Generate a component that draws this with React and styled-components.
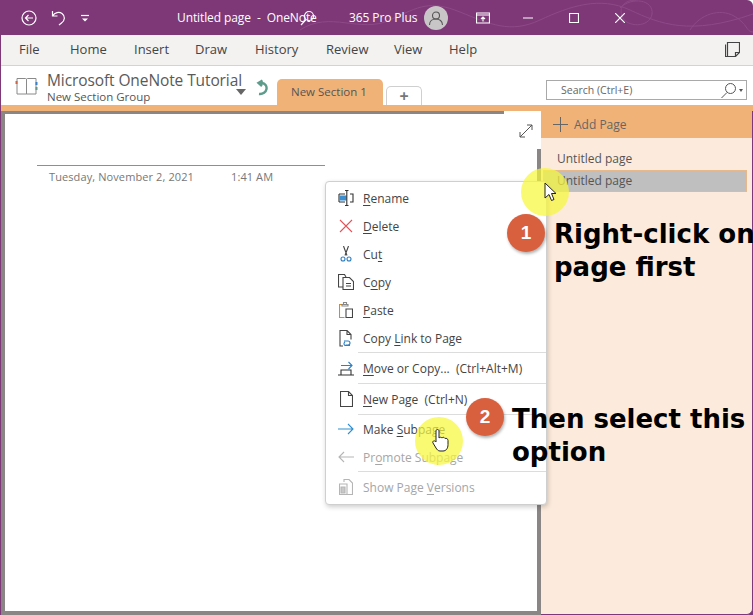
import React from "react";
import styled, { createGlobalStyle } from "styled-components";

const Global = createGlobalStyle`
  html, body { margin: 0; padding: 0; background: #fff; }
  body { font-family: "Open Sans", "Noto Sans", "Liberation Sans", sans-serif; }
`;

const Window = styled.div`
  position: relative;
  width: 753px;
  height: 615px;
  overflow: hidden;
  display: flex;
  flex-direction: column;
  background: #7e3878;
  border-top-right-radius: 6px;
`;

/* title bar */
const TitleBar = styled.div`
  position: relative;
  height: 35px;
  flex: none;
  display: flex;
  align-items: center;
  color: #fff;
  font-size: 12px;
`;

const Swirl = styled.svg`
  position: absolute;
  left: 300px;
  top: 0;
  width: 453px;
  height: 35px;
  fill: none;
  stroke: #8d4a87;
  stroke-width: 1;
`;

const TitleIcon = styled.svg`
  position: relative;
  flex: none;
  margin-left: ${p => p.$ml}px;
  fill: none;
  stroke: #fff;
  stroke-width: 1.2;
`;

const TitleText = styled.div`
  position: relative;
  flex: none;
  margin-left: ${p => p.$ml}px;
  width: ${p => p.$w}px;
  white-space: pre;
  letter-spacing: -0.1px;
`;

const Avatar = styled.div`
  position: relative;
  flex: none;
  width: 24px;
  height: 24px;
  margin-left: 11px;
  border-radius: 50%;
  background: #c9c6c8;
  display: flex;
  align-items: center;
  justify-content: center;
`;

/* ribbon tabs */
const Ribbon = styled.div`
  height: 31px;
  flex: none;
  box-sizing: border-box;
  padding: 0 0 2px 18px;
  display: flex;
  align-items: center;
  background: #f3f2f1;
  border-bottom: 1px solid #d4d3d2;
  font-size: 13px;
  color: #444;
  margin-left: 1px;
`;

const RibbonTab = styled.div`
  flex: none;
  width: ${p => p.$w}px;
`;

const StickyIcon = styled.svg`
  margin-left: auto;
  margin-right: 13px;
  fill: none;
  stroke: #444;
  stroke-width: 1.2;
`;

/* notebook + sections row */
const SectionBar = styled.div`
  height: 39px;
  flex: none;
  display: flex;
  align-items: flex-end;
  background: #fff;
  margin-left: 1px;
  position: relative;
`;

const Notebook = styled.svg`
  align-self: center;
  margin-left: 14px;
  flex: none;
  fill: none;
`;

const NotebookText = styled.div`
  align-self: center;
  margin-left: 9px;
  width: 189px;
  flex: none;
  color: #5a5a5a;
  white-space: nowrap;
`;

const NotebookName = styled.div`
  font-size: 15.5px;
  line-height: 19px;
  margin-top: 3px;
  letter-spacing: -0.1px;
`;

const GroupName = styled.div`
  font-size: 11.5px;
  line-height: 14px;
  color: #555;
`;

const Caret = styled.div`
  align-self: center;
  margin-top: 12px;
  flex: none;
  width: 0;
  height: 0;
  border-left: 5px solid transparent;
  border-right: 5px solid transparent;
  border-top: 6px solid #666;
`;

const SyncIcon = styled.svg`
  align-self: center;
  flex: none;
  margin-left: 10px;
  margin-top: 4px;
  fill: none;
  stroke: #5d9c8b;
  stroke-width: 2.4;
`;

const SectionTab = styled.div`
  flex: none;
  margin-left: 9px;
  width: 106px;
  height: 26px;
  box-sizing: border-box;
  padding: 5px 0 0 14px;
  background: #f0b277;
  border-radius: 5px 5px 0 0;
  font-size: 11.5px;
  color: #555;
`;

const NewTab = styled.div`
  flex: none;
  margin-left: 3px;
  width: 36px;
  height: 19px;
  box-sizing: border-box;
  border: 1px solid #cfcfcf;
  border-bottom: none;
  border-radius: 5px 5px 0 0;
  font-size: 16px;
  font-weight: 700;
  line-height: 18px;
  text-align: center;
  color: #777;
`;

const SearchBox = styled.div`
  position: absolute;
  right: 6px;
  top: 14px;
  width: 201px;
  height: 20px;
  box-sizing: border-box;
  border: 1px solid #a9a9a9;
  display: flex;
  align-items: center;
  padding-left: 14px;
  font-size: 10.5px;
  color: #666;
`;

const SearchTools = styled.div`
  margin-left: auto;
  margin-right: 3px;
  display: flex;
  align-items: center;
  gap: 2px;
`;

const TinyCaret = styled.div`
  width: 0;
  height: 0;
  border-left: 2.5px solid transparent;
  border-right: 2.5px solid transparent;
  border-top: 3px solid #555;
`;

const OrangeStrip = styled.div`
  height: 6px;
  flex: none;
  background: #f0b277;
  margin-left: 1px;
`;

/* main area */
const Body = styled.div`
  flex: 1;
  display: flex;
  min-height: 0;
  margin-left: 1px;
`;

const PageArea = styled.div`
  position: relative;
  width: 540px;
  flex: none;
  box-sizing: border-box;
  padding: 0 4px 4px 4px;
  background: #8a8686;
  display: flex;
  flex-direction: column;
`;

const Paper = styled.div`
  flex: 1;
  margin-top: 3px;
  background: #fff;
  position: relative;
  padding: 51px 0 0 32px;
`;

const TopNotch = styled.div`
  position: absolute;
  right: 0;
  top: 0;
  width: 37px;
  height: 38px;
  background: #fff;
`;

const ExpandIcon = styled.svg`
  position: absolute;
  right: 4px;
  top: 10px;
  fill: none;
  stroke: #555;
  stroke-width: 1;
`;

const TitleRule = styled.div`
  width: 288px;
  height: 1px;
  background: #8f8f8f;
`;

const DateLine = styled.div`
  display: flex;
  margin: 3px 0 0 12px;
  font-size: 11px;
  line-height: 15px;
  color: #777;
  letter-spacing: 0.1px;
`;

const DateText = styled.div`
  width: 182px;
`;

const PagePanel = styled.div`
  flex: 1;
  background: #fcebdc;
  border-right: 1px solid #7e3878;
  border-bottom: 1px solid #7e3878;
  border-bottom-right-radius: 6px;
  font-size: 12px;
  color: #555;
`;

const AddPage = styled.div`
  height: 27px;
  box-sizing: border-box;
  padding-left: 12px;
  display: flex;
  align-items: center;
  gap: 6px;
  background: #f0b277;
  color: #666;
`;

const PageList = styled.div`
  padding: 10px 5px 0 2px;
`;

const PageRow = styled.div`
  height: 22px;
  box-sizing: border-box;
  padding-left: 13px;
  line-height: 20px;
  border: 1px solid ${p => (p.$selected ? "#e6b98c" : "transparent")};
  background: ${p => (p.$selected ? "#bfbfbf" : "transparent")};
`;

/* context menu */
const Menu = styled.div`
  position: absolute;
  left: 325px;
  top: 181px;
  width: 222px;
  height: 324px;
  box-sizing: border-box;
  padding-top: 2px;
  background: #fff;
  border: 1px solid #cfcfcf;
  border-radius: 4px;
  box-shadow: 1px 2px 5px rgba(0, 0, 0, 0.2);
  font-size: 12px;
`;

const MenuRow = styled.div`
  height: ${p => p.$h || 28}px;
  display: flex;
  align-items: center;
  color: ${p => (p.$off ? "#a6a6a6" : "#444")};
  white-space: pre;
`;

const MenuIcon = styled.div`
  width: 37px;
  flex: none;
  display: flex;
  justify-content: center;
  padding-left: 3px;
  box-sizing: border-box;
`;

const MenuSep = styled.div`
  height: 1px;
  margin-left: 32px;
  background: #dcdcdc;
`;

const Key = styled.span`
  text-decoration: underline;
  text-underline-offset: 2px;
`;

/* tutorial overlay */
const Glow = styled.div`
  position: absolute;
  left: ${p => p.$x - 24}px;
  top: ${p => p.$y - 24}px;
  width: 48px;
  height: 48px;
  border-radius: 50%;
  background: rgba(247, 247, 60, 0.72);
`;

const StepBadge = styled.div`
  position: absolute;
  left: ${p => p.$x - 19}px;
  top: ${p => p.$y - 19}px;
  width: 38px;
  height: 38px;
  border-radius: 50%;
  background: #d8603f;
  color: #fff;
  font-family: "Liberation Sans", sans-serif;
  font-size: 19px;
  font-weight: 700;
  display: flex;
  align-items: center;
  justify-content: center;
  box-shadow: 1px 2px 3px rgba(0, 0, 0, 0.3);
`;

const Callout = styled.div`
  position: absolute;
  left: ${p => p.$x}px;
  top: ${p => p.$y}px;
  font-family: "DejaVu Sans", sans-serif;
  font-size: 26px;
  font-weight: 700;
  line-height: 33px;
  color: #000;
  white-space: nowrap;
`;

const Pointer = styled.svg`
  position: absolute;
  left: ${p => p.$x}px;
  top: ${p => p.$y}px;
`;

const stroke = { fill: "none", strokeWidth: 1.1 };

function App() {
  return (
    <Window>
      <Global />
      <TitleBar>
        <Swirl viewBox="0 0 453 35">
          <path d="M0 30C30 10 60 34 90 20S130 0 160 12 210 34 240 20 300 -4 330 10 390 36 453 14" />
          <path d="M320 8c12-12 34-8 32 6s-26 14-30 2 6-16 14-16M390 30c10-16 30-22 44-14s12 16 19 16" />
        </Swirl>
        <TitleIcon $ml={21} width="16" height="16" viewBox="0 0 16 16">
          <circle cx="8" cy="8" r="7" />
          <path d="M12 8H4.5M7.5 5 4.5 8l3 3" />
        </TitleIcon>
        <TitleIcon $ml={14} width="16" height="18" viewBox="0 0 16 18">
          <path d="M1.5 2v5h5M1.5 7C4 3.5 8 2.5 11 4.5c3.500 2.500 3 7-.5 9.500L8 16" />
        </TitleIcon>
        <TitleIcon $ml={13} width="10" height="10" viewBox="0 0 10 10">
          <path d="M1 2.500h8" />
          <path d="M2 5.500h6L5 8.500z" fill="#fff" stroke="none" />
        </TitleIcon>
        <TitleText $ml={87} $w={215}>Untitled page  -  OneNote</TitleText>
        <TitleIcon $ml={-93} width="16" height="16" viewBox="0 0 16 16">
          <circle cx="10" cy="6" r="4.500" />
          <path d="M7 9.500 2 15" />
        </TitleIcon>
        <TitleText $ml={34} $w={64}>365 Pro Plus</TitleText>
        <Avatar>
          <svg width="16" height="16" viewBox="0 0 16 16" fill="none" stroke="#555" strokeWidth="1.1">
            <circle cx="8" cy="5.500" r="3.500" />
            <path d="M1.500 15c0-4 3-6 6.500-6s6.500 2 6.500 6" />
          </svg>
        </Avatar>
        <TitleIcon $ml={28} width="14" height="12" viewBox="0 0 14 12">
          <path d="M.5 1h13v10H.5zM.5 3h13M7 9.500V5M5 7l2-2 2 2" />
        </TitleIcon>
        <TitleIcon $ml={33} width="10" height="10" viewBox="0 0 10 10">
          <path d="M0 5h10" />
        </TitleIcon>
        <TitleIcon $ml={36} width="10" height="10" viewBox="0 0 10 10">
          <path d="M.5.500h9v9h-9z" />
        </TitleIcon>
        <TitleIcon $ml={36} width="10" height="10" viewBox="0 0 10 10">
          <path d="m0 0 10 10M10 0 0 10" />
        </TitleIcon>
      </TitleBar>

      <Ribbon>
        <RibbonTab $w={51}>File</RibbonTab>
        <RibbonTab $w={64}>Home</RibbonTab>
        <RibbonTab $w={61}>Insert</RibbonTab>
        <RibbonTab $w={60}>Draw</RibbonTab>
        <RibbonTab $w={71}>History</RibbonTab>
        <RibbonTab $w={68}>Review</RibbonTab>
        <RibbonTab $w={55}>View</RibbonTab>
        <RibbonTab $w={30}>Help</RibbonTab>
        <StickyIcon width="15" height="15" viewBox="0 0 15 15">
          <path d="M2.500.500h12v10l-4 4h-8zM.5 2.500v12h10M14.500 10.500h-4v4" />
        </StickyIcon>
      </Ribbon>

      <SectionBar>
        <Notebook width="23" height="20" viewBox="0 0 23 20">
          <path d="M2 2.500h8.500c.5 0 1 .5 1 1V18H2zM21 2.500h-8.500c-.5 0-1 .5-1 1V18H21z" stroke="#8a8a8a" />
          <path d="M.5 5h2v3h-2z" fill="#d8603f" />
          <path d="M20.500 6h2v3h-2z" fill="#3b7fc4" />
          <path d="M20.500 11h2v3h-2z" fill="#5d9c8b" />
        </Notebook>
        <NotebookText>
          <NotebookName>Microsoft OneNote Tutorial</NotebookName>
          <GroupName>New Section Group</GroupName>
        </NotebookText>
        <Caret />
        <SyncIcon width="12" height="17" viewBox="0 0 12 17">
          <path d="M6.500 1.500 2.500 4l3.500 3M3 4h3c3 .5 5 3 4.500 6S7 15.500 3 15" />
        </SyncIcon>
        <SectionTab>New Section 1</SectionTab>
        <NewTab>+</NewTab>
        <SearchBox>
          Search (Ctrl+E)
          <SearchTools>
            <svg width="17" height="17" viewBox="0 0 17 17" fill="none" stroke="#555" strokeWidth="1">
              <circle cx="10.500" cy="6.500" r="5" />
              <path d="M7 10.500 1.500 16" />
            </svg>
            <TinyCaret />
          </SearchTools>
        </SearchBox>
      </SectionBar>

      <OrangeStrip />

      <Body>
        <PageArea>
          <TopNotch />
          <Paper>
            <ExpandIcon width="14" height="14" viewBox="0 0 14 14">
              <path d="M1 13 13 1M8 1h5v5M1 8v5h5" />
            </ExpandIcon>
            <TitleRule />
            <DateLine>
              <DateText>Tuesday, November 2, 2021</DateText>
              <div>1:41 AM</div>
            </DateLine>
          </Paper>
        </PageArea>
        <PagePanel>
          <AddPage>
            <svg width="15" height="15" viewBox="0 0 15 15" stroke="#666" strokeWidth="1">
              <path d="M7.500 0v15M0 7.500h15" />
            </svg>
            Add Page
          </AddPage>
          <PageList>
            <PageRow>Untitled page</PageRow>
            <PageRow $selected>Untitled page</PageRow>
          </PageList>
        </PagePanel>
      </Body>

      <Menu>
        <MenuRow>
          <MenuIcon>
            <svg width="16" height="16" viewBox="0 0 16 16" {...stroke} stroke="#333">
              <path d="M1 4h6M1 12h6M1 4v8M12 4h3v8h-3" />
              <path d="M2 6h6v4H2z" fill="#3b8ed0" stroke="#3b8ed0" />
              <path d="M7 .5h3.500M7 15.500h3.500M8.800.5v15" />
            </svg>
          </MenuIcon>
          <span><Key>R</Key>ename</span>
        </MenuRow>
        <MenuRow>
          <MenuIcon>
            <svg width="14" height="14" viewBox="0 0 14 14" fill="none" stroke="#e0545a" strokeWidth="1.1">
              <path d="m1 1 12 12M13 1 1 13" />
            </svg>
          </MenuIcon>
          <span><Key>D</Key>elete</span>
        </MenuRow>
        <MenuRow>
          <MenuIcon>
            <svg width="12" height="16" viewBox="0 0 12 16" {...stroke} stroke="#444">
              <path d="m3.500 0 3.500 9.500M8.500 0 5 9.500" />
              <circle cx="3" cy="13" r="2" stroke="#2f7fc1" />
              <circle cx="9" cy="13" r="2" stroke="#2f7fc1" />
            </svg>
          </MenuIcon>
          <span>Cu<Key>t</Key></span>
        </MenuRow>
        <MenuRow>
          <MenuIcon>
            <svg width="16" height="16" viewBox="0 0 16 16" {...stroke} stroke="#444">
              <path d="M5 13H.5V.5h6L8 3" />
              <path d="M5 3.500h6.500l4 4v8H5zM8 9.500h5M8 12h5" />
            </svg>
          </MenuIcon>
          <span>C<Key>o</Key>py</span>
        </MenuRow>
        <MenuRow>
          <MenuIcon>
            <svg width="14" height="16" viewBox="0 0 14 16" {...stroke} stroke="#d98a1f">
              <path d="M7 2.500H.5v13h5" />
              <path d="M3 2.500h6V4H3zM4.500 2.500V.5h3v2" stroke="#888" />
              <path d="M7 7h6.500v8.500H7z" stroke="#444" />
            </svg>
          </MenuIcon>
          <span><Key>P</Key>aste</span>
        </MenuRow>
        <MenuRow>
          <MenuIcon>
            <svg width="16" height="17" viewBox="0 0 16 17" {...stroke} stroke="#444">
              <path d="M2 12V.5h7l4 4v5M9 .5v4h4M2 12v4h3" />
              <path d="M6 11h4a2 2 0 0 1 0 4H7.500M12 15.500H7a2 2 0 0 1 0-3.500" stroke="#2f7fc1" />
            </svg>
          </MenuIcon>
          <span>Copy <Key>L</Key>ink to Page</span>
        </MenuRow>
        <MenuSep />
        <MenuRow $h={30}>
          <MenuIcon>
            <svg width="16" height="15" viewBox="0 0 16 15" {...stroke} stroke="#333">
              <path d="M3 4.500h11M10.500 1 14 4.500 10.500 8" stroke="#2f7fc1" />
              <path d="M3 14V9h10v5M0 14h16" />
            </svg>
          </MenuIcon>
          <span><Key>M</Key>ove or Copy...  (Ctrl+Alt+M)</span>
        </MenuRow>
        <MenuSep />
        <MenuRow $h={30}>
          <MenuIcon>
            <svg width="13" height="16" viewBox="0 0 13 16" {...stroke} stroke="#444">
              <path d="M.5.500h8l4 4v11H.5zM8.500.5v4h4" />
            </svg>
          </MenuIcon>
          <span><Key>N</Key>ew Page  (Ctrl+N)</span>
        </MenuRow>
        <MenuSep />
        <MenuRow>
          <MenuIcon>
            <svg width="16" height="12" viewBox="0 0 16 12" {...stroke} stroke="#2f8fd0">
              <path d="M0 6h15M10 1l5 5-5 5" />
            </svg>
          </MenuIcon>
          <span>Make <Key>S</Key>ubpage</span>
        </MenuRow>
        <MenuRow $off>
          <MenuIcon>
            <svg width="16" height="12" viewBox="0 0 16 12" {...stroke} stroke="#b5b5b5">
              <path d="M16 6H1M6 1 1 6l5 5" />
            </svg>
          </MenuIcon>
          <span>Pr<Key>o</Key>mote Subpage</span>
        </MenuRow>
        <MenuSep />
        <MenuRow $off $h={30}>
          <MenuIcon>
            <svg width="14" height="16" viewBox="0 0 14 16" {...stroke} stroke="#b5b5b5">
              <path d="M5 3V.5h5l3.500 3.500v11.500H.5V5H8v10.500" />
              <path d="M2 8h4v6H2z" fill="#c8c8c8" />
            </svg>
          </MenuIcon>
          <span>Show Page <Key>V</Key>ersions</span>
        </MenuRow>
      </Menu>

      <Glow $x={545} $y={192} />
      <Glow $x={439} $y={441} />
      <Pointer $x={544} $y={182} width="13" height="21" viewBox="0 0 13 21">
        <path d="M1 1v15l4-3.500 2.500 6 2.500-1-2.500-6H12z" fill="#fff" stroke="#222" strokeWidth="1" />
      </Pointer>
      <Pointer $x={432} $y={429} width="17" height="23" viewBox="0 0 17 23">
        <path d="M4 2c0-2 3-2 3 0v7c1-1 2-1 3 0 1-1 2-1 3 .5 1-.5 3 0 3 2v4c0 4-2 6.500-5 6.500H8c-2 0-3-1.500-4-3L1 14c-1-1.500 1-3 2.500-1.500L4 13z" fill="#fff" stroke="#222" strokeWidth="1" />
      </Pointer>

      <StepBadge $x={526} $y={233}>1</StepBadge>
      <Callout $x={554} $y={218}>Right-click on the<br />page first</Callout>
      <StepBadge $x={485} $y={417}>2</StepBadge>
      <Callout $x={512} $y={403}>Then select this<br />option</Callout>
    </Window>
  );
}

export default App;
